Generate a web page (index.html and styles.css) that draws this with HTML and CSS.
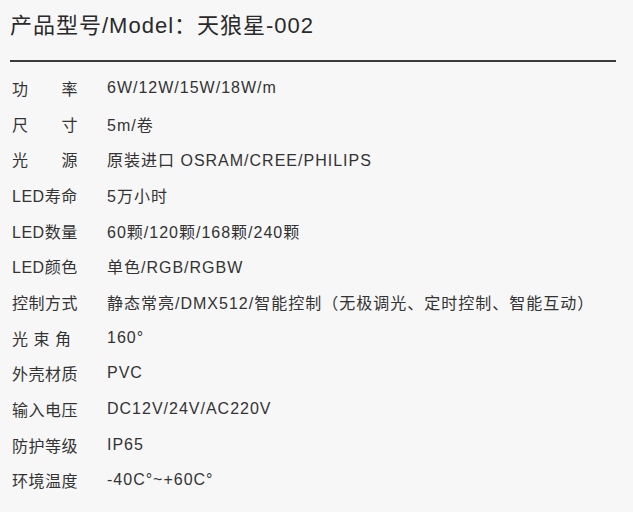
FILE: index.html
```html
<!DOCTYPE html>
<html lang="zh-CN">
<head>
<meta charset="utf-8">
<link rel="stylesheet" href="styles.css">
</head>
<body>
<div class="page">
  <h1 class="title">产品型号/Model：天狼星-002</h1>
  <div class="rule"></div>
  <dl class="specs">
    <div class="row"><dt class="label spread">功<span>率</span></dt><dd class="value">6W/12W/15W/18W/m</dd></div>
    <div class="row"><dt class="label spread">尺<span>寸</span></dt><dd class="value">5m/卷</dd></div>
    <div class="row"><dt class="label spread">光<span>源</span></dt><dd class="value">原装进口 OSRAM/CREE/PHILIPS</dd></div>
    <div class="row"><dt class="label">LED寿命</dt><dd class="value">5万小时</dd></div>
    <div class="row"><dt class="label">LED数量</dt><dd class="value">60颗/120颗/168颗/240颗</dd></div>
    <div class="row"><dt class="label">LED颜色</dt><dd class="value">单色/RGB/RGBW</dd></div>
    <div class="row"><dt class="label">控制方式</dt><dd class="value">静态常亮/DMX512/智能控制（无极调光、定时控制、智能互动）</dd></div>
    <div class="row"><dt class="label">光 束 角</dt><dd class="value">160°</dd></div>
    <div class="row"><dt class="label">外壳材质</dt><dd class="value">PVC</dd></div>
    <div class="row"><dt class="label">输入电压</dt><dd class="value">DC12V/24V/AC220V</dd></div>
    <div class="row"><dt class="label">防护等级</dt><dd class="value">IP65</dd></div>
    <div class="row"><dt class="label">环境温度</dt><dd class="value">-40C°~+60C°</dd></div>
  </dl>
</div>
</body>
</html>
```

FILE: styles.css
```css
html, body {
  margin: 0;
  padding: 0;
  background: #f7f7f7;
}
body {
  font-family: "Liberation Sans", Arial, "Noto Sans CJK SC", sans-serif;
  color: #333;
}
.page {
  width: 633px;
  height: 512px;
  padding: 0 17px 0 10px;
  box-sizing: border-box;
  overflow: hidden;
}
.title {
  margin: 0;
  padding-top: 12px;
  font-size: 22px;
  font-weight: normal;
  line-height: 28px;
  letter-spacing: 1px;
  color: #2a2a2a;
}
.rule {
  margin-top: 20px;
  height: 2px;
  background: #3a3a3a;
}
.specs {
  margin: 8px 0 0;
  padding: 0;
}
.row {
  display: flex;
  align-items: center;
  height: 35.7px;
  font-size: 16px;
  letter-spacing: 1px;
}
.label {
  width: 97px;
  flex: none;
  margin: 0;
  padding-left: 2px;
  box-sizing: border-box;
  white-space: pre;
  letter-spacing: 0.5px;
}
.label.spread span {
  margin-left: 33px;
}
.value {
  margin: 0;
  white-space: nowrap;
}
```
